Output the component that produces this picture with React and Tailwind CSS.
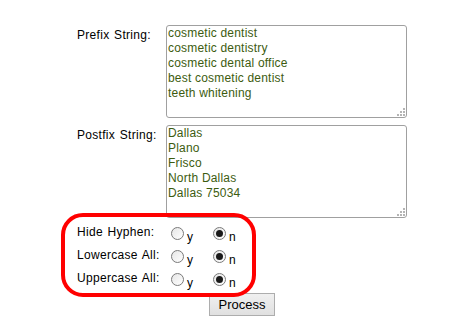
import React from 'react';

const font = { fontFamily: '"Liberation Sans", Arial, sans-serif' };

function Grip() {
  return (
    <svg className="pointer-events-none absolute bottom-[2px] right-[2px]" width="8" height="8" viewBox="0 0 8 8">
      {[
        [6, 0], [3, 3], [6, 3], [0, 6], [3, 6], [6, 6],
      ].map(([x, y]) => (
        <rect key={`${x}-${y}`} x={x} y={y} width="2" height="2" fill="#b5b5b5" />
      ))}
    </svg>
  );
}

function StringField({ label, lines }) {
  return (
    <div className="flex">
      <div className="w-[89px] pt-[3px] text-[12px] leading-[14px] tracking-[0.3px] text-black [word-spacing:1px]">
        {label}
      </div>
      <div className="relative">
        <textarea
          readOnly
          value={lines.join('\n')}
          className="block h-[93px] w-[241px] resize-none rounded-[3px] border border-[#a0a0a0] bg-white px-[1px] pt-0 text-[12px] leading-[15px] tracking-[0.2px] text-[#3d5c10] outline-none"
          style={font}
        />
        <Grip />
      </div>
    </div>
  );
}

function Radio({ checked, letter }) {
  return (
    <div className="flex items-start">
      <span className="mt-[4px] flex h-[13px] w-[13px] items-center justify-center rounded-full border border-[#7a7a7a] bg-gradient-to-br from-[#e6e6e6] to-white">
        {checked && <span className="h-[7px] w-[7px] rounded-full bg-[#1a1a1a]" />}
      </span>
      <span className="ml-[3px] mt-[7px] text-[12px] leading-[14px] text-black">{letter}</span>
    </div>
  );
}

function OptionRow({ label }) {
  return (
    <div className="flex h-[23px] items-start">
      <div className="w-[94px] pt-[2px] text-[12px] leading-[14px] tracking-[0.3px] text-black [word-spacing:1px]">
        {label}
      </div>
      <div className="w-[42px]">
        <Radio letter="y" />
      </div>
      <Radio checked letter="n" />
    </div>
  );
}

export default function App() {
  return (
    <div className="relative h-[334px] w-[474px] overflow-hidden bg-white" style={font}>
      <div className="flex flex-col pl-[77px] pt-[25px]">
        <div className="flex flex-col gap-[7px]">
          <StringField
            label="Prefix String:"
            lines={[
              'cosmetic dentist',
              'cosmetic dentistry',
              'cosmetic dental office',
              'best cosmetic dentist',
              'teeth whitening',
            ]}
          />
          <StringField
            label="Postfix String:"
            lines={['Dallas', 'Plano', 'Frisco', 'North Dallas', 'Dallas 75034']}
          />
        </div>
        <div className="mt-[5px] flex flex-col">
          <OptionRow label="Hide Hyphen:" />
          <OptionRow label="Lowercase All:" />
          <OptionRow label="Uppercase All:" />
        </div>
        <div className="pl-[132px]">
          <button
            className="mt-[1px] h-[23px] w-[66px] border border-[#adadad] bg-gradient-to-b from-[#f0f0f0] to-[#e0e0e0] text-[13px] leading-none text-black"
            style={font}
          >
            Process
          </button>
        </div>
      </div>
      <div className="pointer-events-none absolute left-[61px] top-[213px] h-[84px] w-[195px] rounded-[22px] border-4 border-[#ff0000]" />
    </div>
  );
}
